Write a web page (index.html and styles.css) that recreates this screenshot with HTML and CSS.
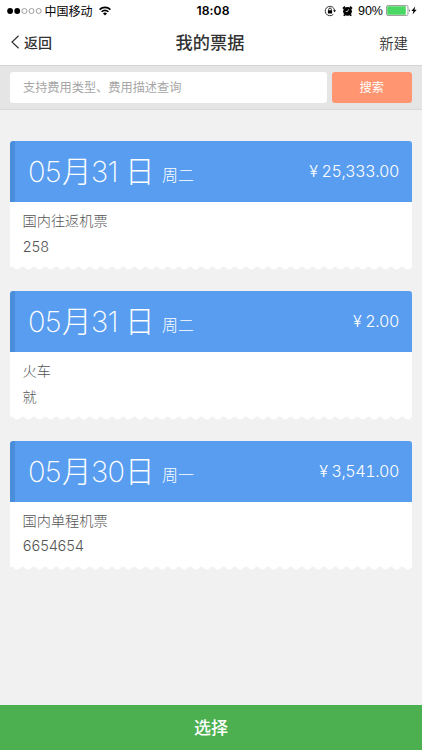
FILE: index.html
```html
<!DOCTYPE html>
<html lang="zh-CN">
<head>
<meta charset="utf-8">
<title>我的票据</title>
<link rel="stylesheet" href="styles.css">
</head>
<body>
<div class="status">
  <div class="status-left">
    <svg width="36" height="8" viewBox="0 0 36 8"><g fill="#000"><circle cx="3.1" cy="4" r="2.9"/><circle cx="10.2" cy="4" r="2.9"/></g><g fill="none" stroke="#777" stroke-width=".7"><circle cx="17.4" cy="4" r="2.5"/><circle cx="24.5" cy="4" r="2.5"/><circle cx="31.7" cy="4" r="2.5"/></g></svg>
    <span class="carrier">中国移动</span>
    <svg class="wifi" width="12" height="10" viewBox="0 0 12 10"><g fill="none" stroke="#000" stroke-width="1.6"><path d="M.6 3.6a7.7 7.7 0 0 1 10.8 0"/><path d="M2.6 5.8a4.8 4.8 0 0 1 6.8 0"/></g><path d="M4 7.4a2.8 2.8 0 0 1 4 0L6 9.4z"/></svg>
  </div>
  <span class="clock">18:08</span>
  <div class="status-right">
    <svg width="12" height="12" viewBox="0 0 12 12"><path d="M9.3 9.3A4.7 4.7 0 1 1 10.6 5.5" fill="none" stroke="#000" stroke-width=".8"/><path d="M9 5.3h3L10.6 7.2z"/><rect x="3.9" y="5.2" width="4.2" height="3.3" rx=".4"/><path d="M4.7 5.4V4.3a1.3 1.3 0 0 1 2.6 0v1.1" fill="none" stroke="#000" stroke-width=".8"/></svg>
    <svg class="alarm" width="11" height="12" viewBox="0 0 11 12"><circle cx="5.5" cy="6.3" r="4.4"/><path d="M1 3.6 3 1.6M10 3.6 8 1.6M2.8 9.6l-1 1.2M8.2 9.6l1 1.2" stroke="#000" stroke-width="1.7"/><path d="M6.6 4.2 5.5 6.5H3.8" fill="none" stroke="#fff" stroke-width=".7"/></svg>
    <span class="percent">90%</span>
    <svg width="25" height="11" viewBox="0 0 25 11"><rect x=".5" y=".5" width="21.5" height="10" rx="1.5" fill="#fff" stroke="#777" stroke-width=".7"/><rect x="1.2" y="1.2" width="18.6" height="8.6" rx=".6" fill="#4bd763"/><path d="M23 3.7q1.8 1.8 0 3.6z" fill="#555"/></svg>
    <svg class="bolt" width="6" height="9" viewBox="0 0 6 9"><path d="M4.3.6.3 5h2.2L1.5 8.4 5.7 3.8H3.4z"/></svg>
  </div>
</div>
<header class="nav">
  <div class="back"><svg width="9" height="14" viewBox="0 0 9 14"><path d="M7.6.8 1 7l6.6 6.2" fill="none" stroke="#333" stroke-width="1.2"/></svg><span>返回</span></div>
  <h1>我的票据</h1>
  <span class="create">新建</span>
</header>
<div class="search">
  <div class="field">支持费用类型、费用描述查询</div>
  <div class="go">搜索</div>
</div>
<main class="list">
  <article class="card">
    <div class="head">
      <div class="date"><span class="num">05</span><span class="unit">月</span><span class="num">31</span><span class="unit">日</span></div>
      <div class="week">周二</div>
      <div class="amount"><span class="yen">¥</span>25,333.00</div>
    </div>
    <div class="body"><p>国内往返机票</p><p class="digits">258</p></div>
    <svg class="edge" width="402" height="4"><defs><pattern id="wave" x="1.6" width="11.16" height="4" patternUnits="userSpaceOnUse"><path d="M0 0V.4C2 .4 3.2 3.6 5.58 3.6S9.2.4 11.16.4V0z" fill="#fff"/></pattern></defs><rect width="402" height="4" fill="url(#wave)"/></svg>
  </article>
  <article class="card">
    <div class="head">
      <div class="date"><span class="num">05</span><span class="unit">月</span><span class="num">31</span><span class="unit">日</span></div>
      <div class="week">周二</div>
      <div class="amount"><span class="yen">¥</span>2.00</div>
    </div>
    <div class="body"><p>火车</p><p>就</p></div>
    <svg class="edge" width="402" height="4"><rect width="402" height="4" fill="url(#wave)"/></svg>
  </article>
  <article class="card">
    <div class="head">
      <div class="date"><span class="num">05</span><span class="unit">月</span><span class="num">30</span><span class="unit">日</span></div>
      <div class="week">周一</div>
      <div class="amount"><span class="yen">¥</span>3,541.00</div>
    </div>
    <div class="body"><p>国内单程机票</p><p class="digits">6654654</p></div>
    <svg class="edge" width="402" height="4"><rect width="402" height="4" fill="url(#wave)"/></svg>
  </article>
</main>
<footer class="choose">选择</footer>
</body>
</html>
```
FILE: styles.css
```css
* { box-sizing: border-box; }
body {
  margin: 0;
  width: 422px;
  height: 750px;
  display: flex;
  flex-direction: column;
  overflow: hidden;
  background: #f1f1f1;
  color: #333;
  font-family: "Noto Sans CJK SC", sans-serif;
}
svg { display: block; flex: none; }
h1, p { margin: 0; }
.status {
  height: 21px;
  flex: none;
  display: grid;
  grid-template-columns: 1fr auto 1fr;
  align-items: center;
  padding: 0 5px 0 7px;
  background: #fff;
  color: #000;
  line-height: 20px;
}
.status-left, .status-right { display: flex; align-items: center; }
.status-right { justify-content: flex-end; }
.carrier { margin-left: 1.5px; font-size: 12px; }
.wifi { margin-left: 6px; }
.clock { padding-left: 2px; font: 600 12.2px/20px Inter, sans-serif; letter-spacing: .1px; }
.alarm { margin-left: 6px; }
.percent { margin: 0 3px 0 5px; font: 12.5px/20px "Liberation Sans", sans-serif; }
.nav {
  height: 45px;
  flex: none;
  display: grid;
  grid-template-columns: 1fr auto 1fr;
  align-items: center;
  padding: 0 14px 2px 11px;
  background: #fff;
  border-bottom: 1px solid #d4d4d4;
}
.back { display: flex; align-items: center; gap: 4px; font-size: 14px; font-weight: 500; }
.nav h1 { padding-left: 1px; font-size: 17.2px; font-weight: 500; line-height: 42px; }
.create { justify-self: end; font-size: 14.4px; font-weight: 350; }
.search {
  height: 44px;
  flex: none;
  display: flex;
  gap: 5px;
  padding: 6px 10px;
  background: #e5e5e5;
  border-bottom: 1px solid #dadada;
}
.field, .go { height: 31px; border-radius: 3px; font-size: 12.2px; line-height: 30px; }
.field { flex: 1; padding-left: 13px; background: #fff; color: #a6a6a6; }
.go { width: 80.5px; background: #ff9571; color: #fff; text-align: center; }
.list { flex: 1; padding: 31px 10px 0; display: flex; flex-direction: column; gap: 20.8px; }
.card { height: 129px; flex: none; }
.head {
  height: 61px;
  display: flex;
  align-items: flex-start;
  padding: 0 13px;
  border-left: 5px solid #4a8ddb;
  border-radius: 3px 3px 0 0;
  background: #589df0;
  color: #fff;
  font-weight: 300;
}
.date { display: flex; width: 134px; white-space: nowrap; }
.num { width: 34px; font: 200 29px/61px Inter, sans-serif; letter-spacing: -.8px; }
.unit { width: 29px; font-size: 29.5px; line-height: 57px; }
.week { font-size: 16px; line-height: 67px; }
.amount { margin-left: auto; font: 300 16.1px/60px Inter, sans-serif; font-feature-settings: "tnum"; letter-spacing: -.45px; }
.yen { margin-right: 4px; }
.body { height: 64px; padding: 5px 13px 0 12.5px; background: #fff; color: #555; font-size: 14.2px; font-weight: 300; line-height: 26.5px; }
.digits { font-family: Inter, sans-serif; font-size: 14.4px; font-feature-settings: "tnum"; letter-spacing: -.6px; }
.choose { height: 45px; flex: none; background: #4caf50; color: #fff; font-size: 17px; font-weight: 500; line-height: 43px; text-align: center; }
```
